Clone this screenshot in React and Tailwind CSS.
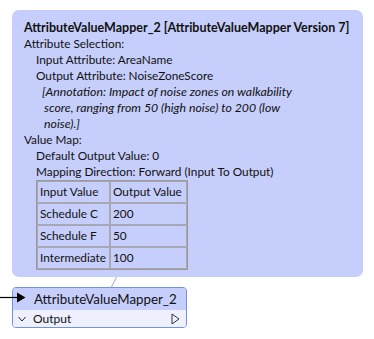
import React from "react";

export default function App() {
  const font = { fontFamily: 'Lato, "Noto Sans", sans-serif' };
  const rows = [
    ["Input Value", "Output Value"],
    ["Schedule C", "200"],
    ["Schedule F", "50"],
    ["Intermediate", "100"],
  ];
  return (
    <div className="relative w-[374px] h-[339px] bg-white overflow-hidden text-[#111]" style={font}>
      <div className="ml-[12px] mt-[10px] w-[351px] h-[267px] rounded-[7px] bg-[#c6cefb] pl-[12px] pt-[10px] text-[11.8px] leading-[16px]">
        <div className="font-bold whitespace-nowrap text-[12.5px]">AttributeValueMapper_2 [AttributeValueMapper Version 7]</div>
        <div>Attribute Selection:</div>
        <div className="pl-[12px]">Input Attribute: AreaName</div>
        <div className="pl-[12px]">Output Attribute: NoiseZoneScore</div>
        <div className="pl-[18px] italic whitespace-nowrap text-[12.3px]">
          <div>[Annotation: Impact of noise zones on walkability</div>
          <div className="pl-[2px]">score, ranging from 50 (high noise) to 200 (low</div>
          <div className="pl-[2px]">noise).]</div>
        </div>
        <div>Value Map:</div>
        <div className="pl-[12px]">Default Output Value: 0</div>
        <div className="pl-[12px]">Mapping Direction: Forward (Input To Output)</div>
        <div className="pl-[12px]">
          <table className="border border-[#9a9a9a] border-separate border-spacing-0">
            <tbody>
              {rows.map((r, i) => (
                <tr key={i} className="h-[22px]">
                  <td className="w-[73px] border border-[#a8a8b4] px-[2px] py-0 align-middle whitespace-nowrap">{r[0]}</td>
                  <td className="w-[77px] border border-[#a8a8b4] px-[2px] py-0 align-middle whitespace-nowrap">{r[1]}</td>
                </tr>
              ))}
            </tbody>
          </table>
        </div>
      </div>

      <svg className="absolute left-0 top-0" width="374" height="339">
        <line x1="116.5" y1="277" x2="111.5" y2="287" stroke="#9aa8d8" strokeWidth="1" />
      </svg>

      <div className="ml-[12px] mt-[10px] w-[175px] h-[41px] rounded-[4px] border border-[#7090e0] overflow-hidden flex flex-col">
        <div className="h-[22px] bg-[#c6cefb] flex items-center pl-[21px] text-[13.3px] leading-[22px] whitespace-nowrap">AttributeValueMapper_2</div>
        <div className="flex-1 bg-[#eef0fd] flex items-center text-[12px] pl-[4px] pr-[6px]">
          <svg width="10" height="10" viewBox="0 0 10 10" className="mr-[6px]">
            <path d="M1.5 3 L5 7 L8.5 3" fill="none" stroke="#222" strokeWidth="1" />
          </svg>
          <span className="flex-1">Output</span>
          <svg width="9" height="12" viewBox="0 0 9 12">
            <path d="M1 1 L8 6 L1 11 Z" fill="none" stroke="#333" strokeWidth="1" />
          </svg>
        </div>
      </div>

      <svg className="absolute left-0 top-[290px]" width="30" height="16">
        <line x1="0" y1="7.5" x2="18" y2="7.5" stroke="#000" strokeWidth="1.2" />
        <path d="M17 2.5 L25.5 7.5 L17 12.5 Z" fill="#000" />
      </svg>
    </div>
  );
}
